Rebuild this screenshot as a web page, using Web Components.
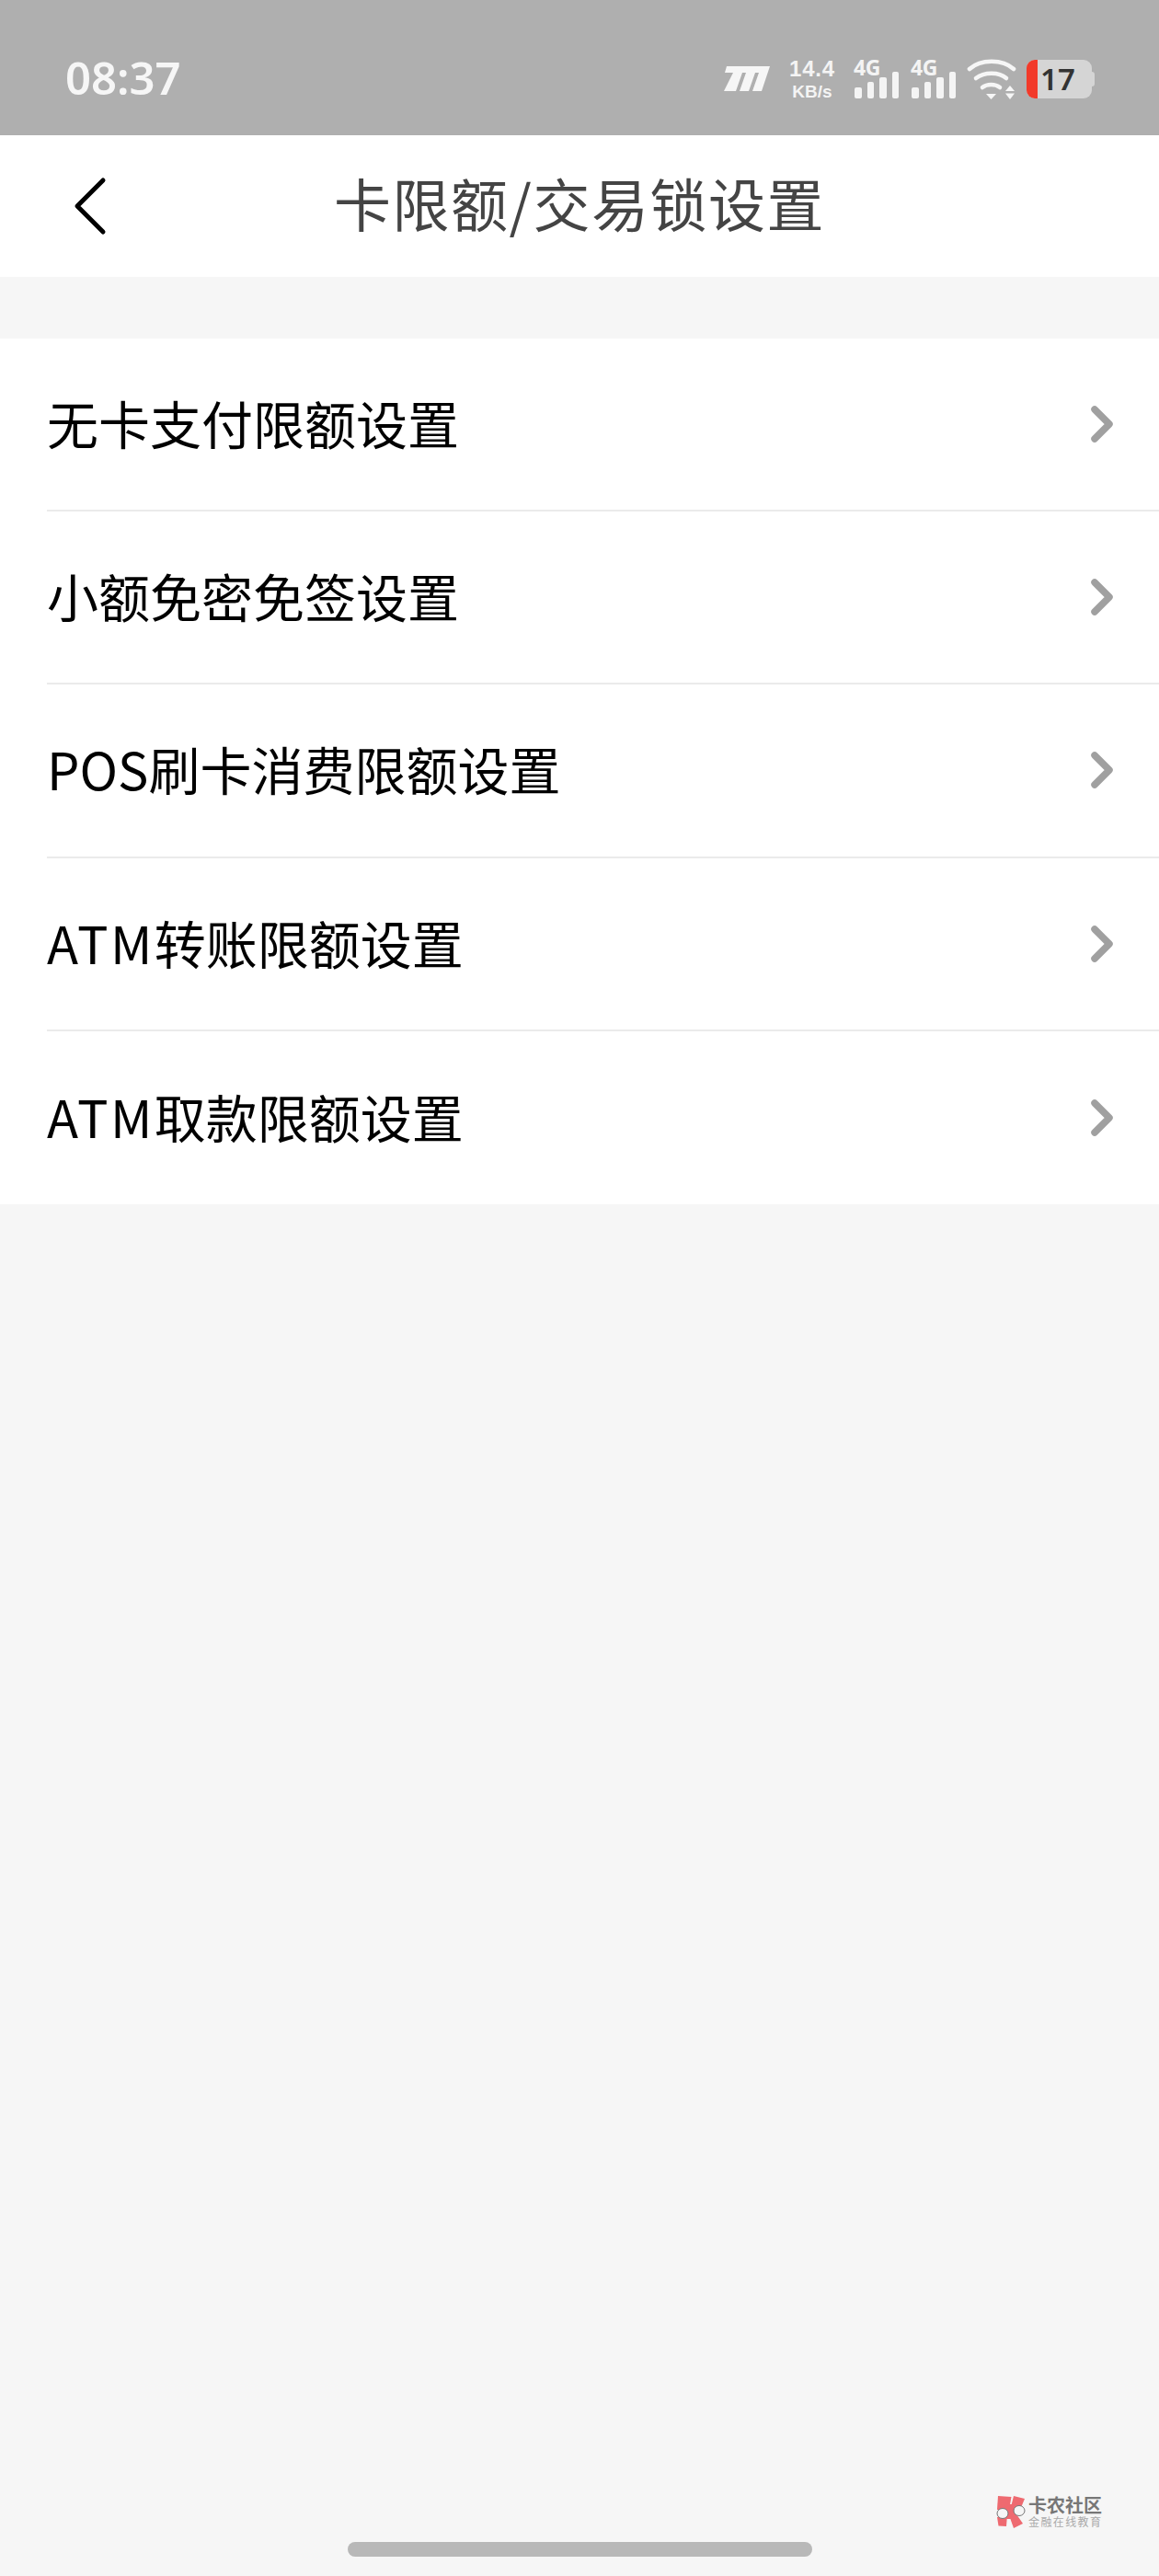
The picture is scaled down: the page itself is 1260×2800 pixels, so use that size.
<!DOCTYPE html>
<html lang="zh">
<head>
<meta charset="utf-8">
<title>卡限额/交易锁设置</title>
<style>
    html, body { margin: 0; background: #f6f6f6; }
    body { font-family: "Noto Sans CJK SC", "Noto Sans", sans-serif; }
    .latin { letter-spacing: 2.4px; }
</style>
</head>
<body>
<app-page>
    <status-bar slot="status"></status-bar>
    <nav-bar slot="nav">卡限额/交易锁设置</nav-bar>
    <settings-list slot="list">
        <setting-row>无卡支付限额设置</setting-row>
        <setting-row>小额免密免签设置</setting-row>
        <setting-row>POS刷卡消费限额设置</setting-row>
        <setting-row><span class="latin">ATM</span>转账限额设置</setting-row>
        <setting-row last><span class="latin">ATM</span>取款限额设置</setting-row>
    </settings-list>
    <card-watermark slot="mark"></card-watermark>
</app-page>

<script>
class AppPage extends HTMLElement {
    constructor() {
        super();
        this.shadow = this.attachShadow({ mode: 'open' });
        this.shadow.innerHTML = /*html*/`
            <style>
                :host {
                    display: flex;
                    flex-direction: column;
                    position: relative;
                    height: 2800px;
                    background: #f6f6f6;
                    overflow: hidden;
                }
                .gap { height: 67px; }
                .home {
                    width: 505px;
                    height: 16px;
                    margin: auto auto 21px;
                    border-radius: 8px;
                    background: #b8b8b8;
                }
            </style>
            <slot name="status"></slot>
            <slot name="nav"></slot>
            <div class="gap"></div>
            <slot name="list"></slot>
            <slot name="mark"></slot>
            <div class="home"></div>
        `;
    }
}

class SignalIcon extends HTMLElement {
    constructor() {
        super();
        this.shadow = this.attachShadow({ mode: 'open' });
        this.shadow.innerHTML = /*html*/`
            <style>
                :host { display: block; position: relative; width: 48px; height: 42px; }
                span {
                    position: absolute;
                    left: -1px;
                    top: -4px;
                    font: 700 23px/24px "Noto Sans", sans-serif;
                    letter-spacing: -.5px;
                    color: #f4f4f4;
                }
                .bars { position: absolute; inset: 0; display: flex; align-items: flex-end; gap: 6px; }
                i { display: block; width: 7.5px; background: #f4f4f4; border-radius: 2px; }
            </style>
            <span>4G</span>
            <div class="bars">
                <i style="height:12px"></i><i style="height:18px"></i><i style="height:23px"></i><i style="height:29px"></i>
            </div>
        `;
    }
}

class StatusBar extends HTMLElement {
    constructor() {
        super();
        this.shadow = this.attachShadow({ mode: 'open' });
        this.shadow.innerHTML = /*html*/`
            <style>
                :host {
                    display: flex;
                    align-items: center;
                    justify-content: space-between;
                    height: 147px;
                    padding: 24px 70px 0 71px;
                    box-sizing: border-box;
                    background: #afafaf;
                    color: #f6f6f6;
                    font-family: "Noto Sans", sans-serif;
                }
                .time { font-size: 49px; font-weight: 600; line-height: 1; margin-top: -2px; }
                .icons { display: flex; align-items: center; }
                .speed {
                    display: flex;
                    flex-direction: column;
                    align-items: center;
                    width: 52px;
                    margin: 2px 20px 0;
                    font-family: "Liberation Sans", sans-serif;
                    font-weight: 700;
                    color: #f4f4f4;
                }
                .speed b { font-size: 24px; line-height: 26px; letter-spacing: .8px; }
                .speed small { font-size: 19px; line-height: 24px; font-weight: 700; }
                signal-icon + signal-icon { margin-left: 14px; }
                .wifi { margin-left: 12px; margin-right: 11px; display: block; }
                .battery {
                    display: flex;
                    align-items: center;
                    position: relative;
                    width: 71px;
                    height: 42px;
                    border-radius: 9px;
                    background: #d5d5d5;
                    overflow: hidden;
                    color: #333;
                    font-size: 33px;
                    font-weight: 600;
                }
                .battery::before {
                    content: "";
                    width: 12px;
                    height: 100%;
                    margin-right: 3px;
                    background: #f23a2a;
                }
                .nub { width: 3px; height: 16px; background: #d5d5d5; border-radius: 0 3px 3px 0; }
            </style>
            <div class="time">08:37</div>
            <div class="icons">
                <svg width="50" height="28" viewBox="0 0 50 28" fill="#f6f6f6">
                    <path d="M3 0H50L41 27H31L38 7H34L27 27H17L24 7H20L13 27H0L10 7H1Z"/>
                </svg>
                <div class="speed"><b>14.4</b><small>KB/s</small></div>
                <signal-icon></signal-icon>
                <signal-icon></signal-icon>
                <svg class="wifi" width="54" height="46" viewBox="0 0 54 46" fill="none" stroke="#f6f6f6" stroke-width="4.6" stroke-linecap="round">
                    <path d="M3 12C15 1 39 1 51 12"/>
                    <path d="M10 22C19 15 35 15 43 22"/>
                    <path d="M17 32C22 28 31 28 36 32"/>
                    <path d="M21 39H32L26.500 45Z" fill="#f6f6f6" stroke="none"/>
                    <path d="M42 36H52L47 30Z" fill="#f6f6f6" stroke="none"/>
                    <path d="M42 38.500H52L47 45Z" fill="#f6f6f6" stroke="none"/>
                </svg>
                <div class="battery">17</div><div class="nub"></div>
            </div>
        `;
    }
}

class NavBar extends HTMLElement {
    constructor() {
        super();
        this.shadow = this.attachShadow({ mode: 'open' });
        this.shadow.innerHTML = /*html*/`
            <style>
                :host {
                    display: grid;
                    grid-template-columns: 1fr auto 1fr;
                    align-items: center;
                    height: 154px;
                    background: #fff;
                }
                svg { display: block; margin-left: 78px; }
                .title {
                    font-size: 62px;
                    line-height: 1;
                    color: #444;
                    letter-spacing: 1.5px;
                    margin-top: -8px;
                }
            </style>
            <svg width="40" height="66" viewBox="0 0 40 66" fill="none" stroke="#000" stroke-width="5" stroke-linecap="round" stroke-linejoin="round">
                <path d="M34 5L6 33L34 61"/>
            </svg>
            <div class="title"><slot></slot></div>
            <div></div>
        `;
    }
}

class SettingsList extends HTMLElement {
    constructor() {
        super();
        this.shadow = this.attachShadow({ mode: 'open' });
        this.shadow.innerHTML = /*html*/`
            <style>
                :host { display: block; background: #fff; }
            </style>
            <slot></slot>
        `;
    }
}

class SettingRow extends HTMLElement {
    constructor() {
        super();
        this.shadow = this.attachShadow({ mode: 'open' });
        this.shadow.innerHTML = /*html*/`
            <style>
                :host { display: block; padding-left: 51px; color: #000; }
                .row {
                    display: flex;
                    align-items: center;
                    justify-content: space-between;
                    height: 188.2px;
                    box-sizing: border-box;
                    padding-right: 48px;
                    border-bottom: 2px solid #ebebeb;
                    font-size: 56px;
                }
                :host([last]) .row { border-bottom: 0; }
                .label { padding-bottom: 5px; }
                svg { display: block; }
            </style>
            <div class="row">
                <span class="label"><slot></slot></span>
                <svg width="28" height="44" viewBox="0 0 28 44" fill="none" stroke="#a0a0a0" stroke-width="7.500" stroke-linecap="round" stroke-linejoin="round">
                    <path d="M6 6L22 22L6 38"/>
                </svg>
            </div>
        `;
    }
}

class CardWatermark extends HTMLElement {
    constructor() {
        super();
        this.shadow = this.attachShadow({ mode: 'open' });
        this.shadow.innerHTML = /*html*/`
            <style>
                :host {
                    position: absolute;
                    left: 1081px;
                    top: 2712px;
                    display: flex;
                    align-items: center;
                    gap: 3px;
                    font-family: "Noto Sans CJK SC", sans-serif;
                }
                .text { display: flex; flex-direction: column; }
                b { font-size: 20px; line-height: 22px; color: #777; font-weight: 700; white-space: nowrap; }
                small { font-size: 12px; line-height: 14px; letter-spacing: 1.4px; color: #aaa; white-space: nowrap; }
            </style>
            <svg width="34" height="36" viewBox="0 0 34 36">
                <g fill="#ee6a70">
                    <path d="M4 1L18.500 2L16 16L3 16Z"/>
                    <path d="M21 1L33 4L28 16L17 17Z"/>
                    <path d="M3 24L14 22L13 34L4.500 33.500Z"/>
                    <path d="M16 22L22 18L31 31L21 36Z"/>
                    <path d="M12 10H22V26H12Z"/>
                </g>
                <ellipse cx="9" cy="20" rx="6" ry="5.500" fill="#f6f6f6" stroke="#777" stroke-width="1"/>
                <ellipse cx="27" cy="17" rx="6" ry="5.500" fill="#f6f6f6" stroke="#777" stroke-width="1"/>
            </svg>
            <div class="text"><b>卡农社区</b><small>金融在线教育</small></div>
        `;
    }
}

customElements.define('signal-icon', SignalIcon);
customElements.define('status-bar', StatusBar);
customElements.define('nav-bar', NavBar);
customElements.define('settings-list', SettingsList);
customElements.define('setting-row', SettingRow);
customElements.define('card-watermark', CardWatermark);
customElements.define('app-page', AppPage);
</script>
</body>
</html>
